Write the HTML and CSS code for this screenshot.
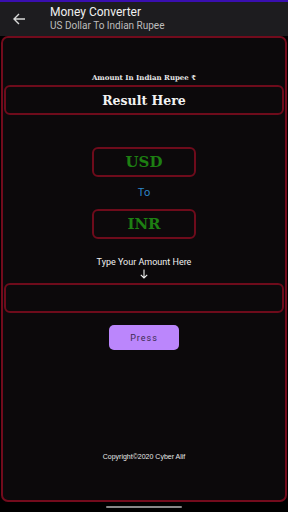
FILE: index.html
```html
<!DOCTYPE html>
<html lang="en">
<head>
    <meta charset="UTF-8">
    <title>Money Converter</title>
    <link rel="stylesheet" href="styles.css">
</head>
<body>
    <div class="appbar">
        <svg class="back" width="14" height="14" viewBox="0 0 14 14">
            <path d="M13 7H2M7 2L2 7l5 5" fill="none" stroke="#d8d8d8" stroke-width="1.4"/>
        </svg>
        <div class="titles">
            <div class="title">Money Converter</div>
            <div class="subtitle">US Dollar To Indian Rupee</div>
        </div>
    </div>

    <div class="container">
        <p class="result-label">Amount In Indian Rupee ₹</p>
        <div class="box result">Result Here</div>

        <div class="box currency">USD</div>
        <p class="to">To</p>
        <div class="box currency">INR</div>

        <p class="hint">Type Your Amount Here</p>
        <svg class="arrow" width="8" height="10" viewBox="0 0 8 10">
            <path d="M4 0.5V9M0.8 5.8L4 9l3.2-3.2" fill="none" stroke="#f0f0f0" stroke-width="1.1"/>
        </svg>
        <div class="box amount"></div>

        <button>Press</button>

        <p class="copyright">Copyright©2020 Cyber Alif</p>
    </div>

    <div class="navbar"><span class="handle"></span></div>
</body>
</html>
```

FILE: styles.css
```css
body {
    margin: 0;
    background-color: #000;
    font-family: Roboto, "Noto Sans", sans-serif;
    color: #eee;
}
.appbar {
    height: 34px;
    border-top: 2px solid #3a0fb0;
    background-color: #1d1c1f;
    display: flex;
    align-items: center;
}
.back {
    margin-left: 12px;
    margin-right: 24px;
}
.title {
    font-size: 12px;
    color: #f0f0f0;
    line-height: 13px;
}
.subtitle {
    font-size: 10px;
    color: #bdbdbd;
    line-height: 13px;
}
.container {
    margin: 0 1px;
    height: 462px;
    border: 2px solid #720b1c;
    border-radius: 7px;
    background-color: #0c090b;
    display: flex;
    flex-direction: column;
    align-items: center;
}
.container p {
    margin: 0;
}
.box {
    border: 2px solid #6e0b1b;
    border-radius: 6px;
    box-sizing: border-box;
    display: flex;
    align-items: center;
    justify-content: center;
    font-family: "DejaVu Serif", "Liberation Serif", serif;
    font-weight: bold;
}
.result-label {
    margin-top: 35px !important;
    font-family: "DejaVu Serif", serif;
    font-weight: bold;
    font-size: 7px;
    line-height: 10px;
    color: #e8e8e8;
}
.result {
    width: 280px;
    height: 30px;
    margin-top: 2px;
    font-size: 12.5px;
    color: #f2f2f2;
}
.currency {
    width: 104px;
    height: 30px;
    font-size: 15px;
    color: #1d7f12;
}
.result + .currency {
    margin-top: 32px;
}
.to {
    margin: 8px 0 !important;
    font-size: 11px;
    line-height: 16px;
    color: #2d86c8;
}
.hint {
    margin-top: 17px !important;
    font-size: 9px;
    line-height: 12px;
    color: #f0f0f0;
}
.arrow {
    margin-top: 1px;
}
.amount {
    width: 280px;
    height: 30px;
    margin-top: 4px;
}
button {
    margin-top: 12px;
    width: 70px;
    height: 25px;
    border: none;
    border-radius: 5px;
    background-color: #bb86fc;
    color: #3b2b50;
    font-family: Roboto, sans-serif;
    font-size: 9px;
    letter-spacing: 1px;
}
.copyright {
    margin-top: 103px !important;
    font-family: "Liberation Sans", Arial, sans-serif;
    font-size: 7px;
    color: #e8e8e8;
}
.navbar {
    height: 10px;
    display: flex;
    justify-content: center;
    align-items: center;
}
.handle {
    width: 76px;
    height: 2px;
    border-radius: 1px;
    background-color: #888;
}
```
